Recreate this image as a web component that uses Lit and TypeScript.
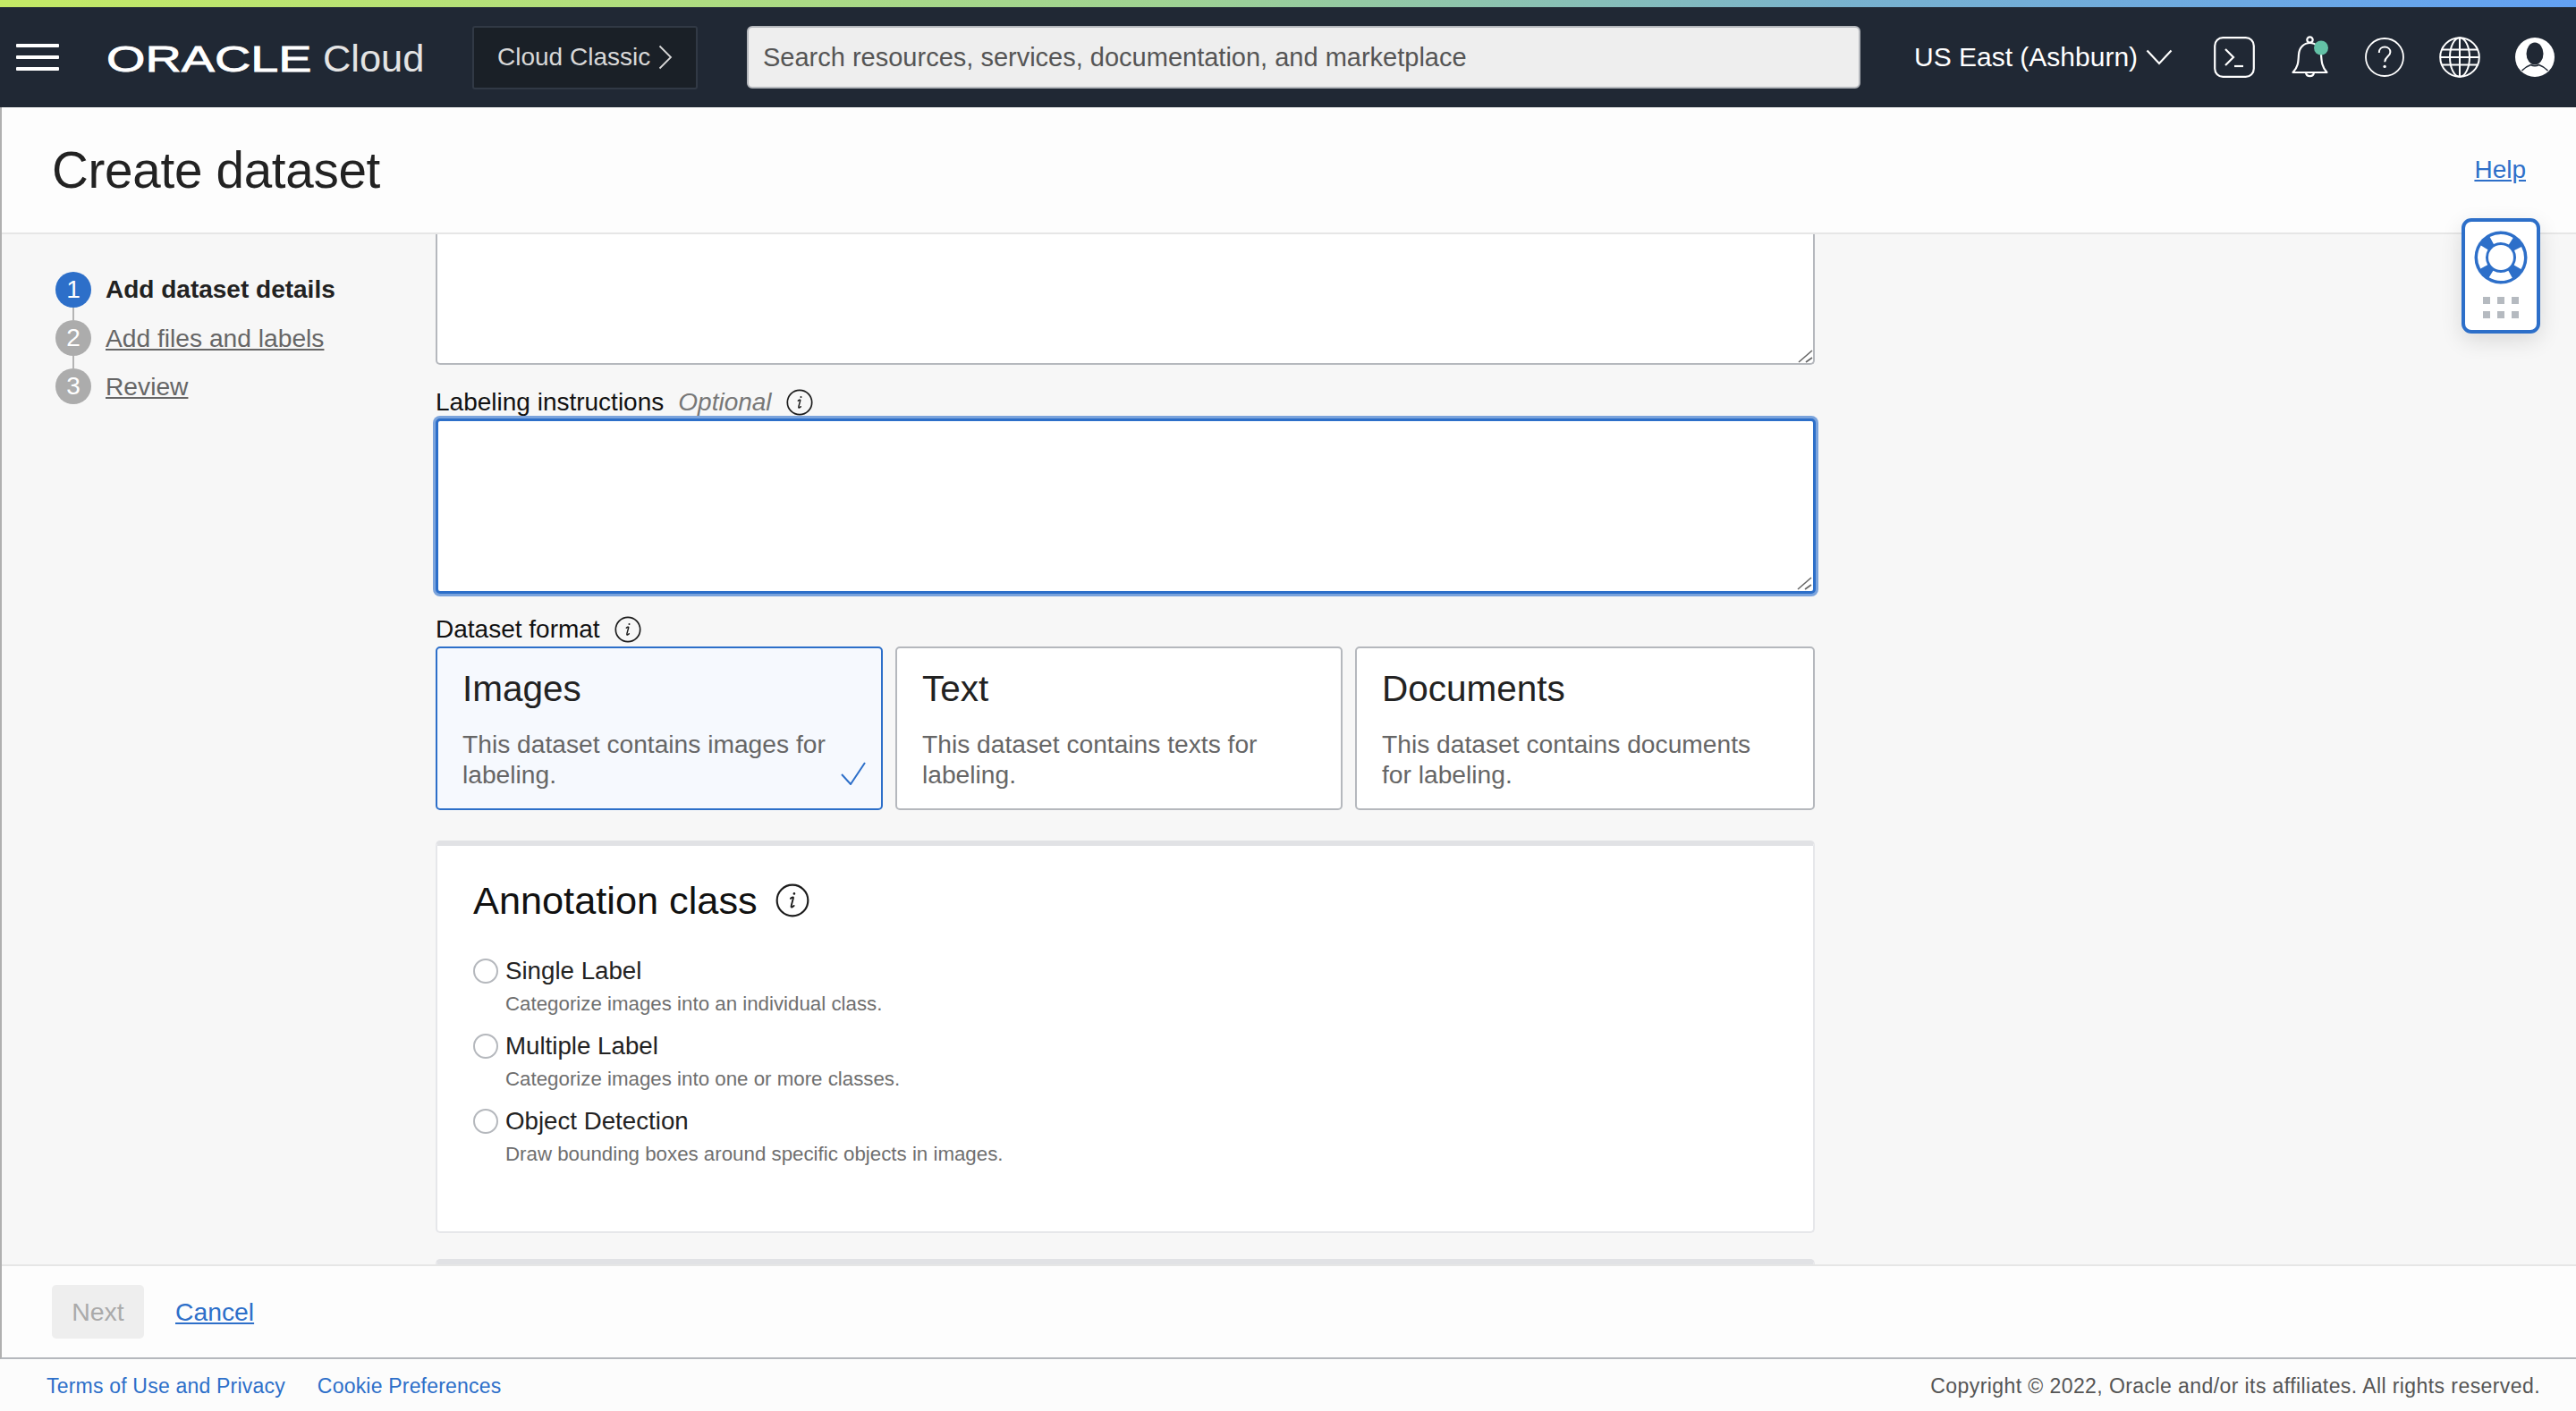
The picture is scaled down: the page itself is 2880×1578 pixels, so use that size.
import { LitElement, html, css, svg } from "lit";
import { customElement } from "lit/decorators.js";

const info = (size: number) => html`<svg class="info" width=${size} height=${size} viewBox="0 0 32 32" fill="none" stroke="#1c1c1c" stroke-width="1.8">
  <circle cx="16" cy="16" r="14.6"/>
  <path d="M14.2 14.2c1-1 2.4-1.6 2.6-.9.2.7-2.2 7.4-2 8.6.2 1 1.6.2 2.6-.9" stroke-width="1.6" stroke-linecap="round"/>
  <circle cx="17.6" cy="9.6" r="1.1" fill="#1c1c1c" stroke="none"/>
</svg>`;

const grip = html`<svg class="grip" width="20" height="20" viewBox="0 0 20 20" fill="none" stroke="#666" stroke-width="1.6"><path d="M2 17L17 4M10 17l7-5"/></svg>`;

const cards = [
  { t: "Images", d: "This dataset contains images for labeling.", sel: true },
  { t: "Text", d: "This dataset contains texts for labeling.", sel: false },
  { t: "Documents", d: "This dataset contains documents for labeling.", sel: false },
];
const radios = [
  { t: "Single Label", d: "Categorize images into an individual class." },
  { t: "Multiple Label", d: "Categorize images into one or more classes." },
  { t: "Object Detection", d: "Draw bounding boxes around specific objects in images." },
];

@customElement("app-root")
export class AppRoot extends LitElement {
  static styles = css`
    :host { display: block; width: 2880px; height: 1578px; overflow: hidden; position: relative;
      font-family: "Liberation Sans", Arial, sans-serif; color: #1c1c1c; background: #fcfcfc; }
    * { box-sizing: border-box; }
    a { color: #2d6fc9; }
    .strip { height: 8px; background: linear-gradient(90deg, #c4ea66 0%, #9fd392 45%, #78b2cf 72%, #62a1f3 100%); }
    .bar { height: 112px; background: #202834; display: flex; align-items: center; color: #fff; padding-right: 24px; }
    .burger { width: 48px; margin-left: 18px; display: flex; flex-direction: column; gap: 9px; }
    .burger i { display: block; height: 4px; background: #fff; border-radius: 1px; }
    .logo { margin-left: 53px; display: block; overflow: visible; }
    .classic { margin-left: 55px; width: 252px; height: 71px; background: #1a2027; border: 2px solid #313945; border-radius: 3px;
      color: #d8d8d8; font-size: 28px; display: flex; align-items: center; padding-left: 26px; gap: 9px; }
    .search { margin-left: 55px; width: 1245px; height: 70px; background: #eee; border: 2px solid #b5b8bd; border-radius: 6px;
      color: #555; font-size: 29px; display: flex; align-items: center; padding-left: 16px; }
    .region { margin-left: 60px; font-size: 30px; display: flex; align-items: center; gap: 9px; }
    .icons { margin-left: auto; display: flex; align-items: center; gap: 39px; }
    .icons svg { display: block; }
    .icons svg:nth-child(2) { margin-left: 2px; }
    .icons svg:nth-child(3) { margin-left: -1px; }
    .page { height: 1400px; border-left: 2px solid #b0b0b0; border-bottom: 2px solid #b5b8bd; display: flex; flex-direction: column; }
    .head { height: 142px; flex: none; background: #fdfdfd; border-bottom: 2px solid #e6e6e6; display: flex; align-items: center;
      justify-content: space-between; padding: 0 56px 0 56px; }
    h1 { margin: 0; font-weight: 400; font-size: 56.6px; letter-spacing: -.3px; color: #222; }
    .help { font-size: 28px; }
    .body { height: 1152px; flex: none; background: #f7f7f7; display: flex; overflow: hidden; }
    .steps { width: 485px; flex: none; padding: 42px 0 0 60px; display: flex; flex-direction: column; }
    .step { display: flex; align-items: center; gap: 16px; font-size: 28.2px; color: #666; position: relative; height: 40px; margin-bottom: 14px; }
    .num { width: 40px; height: 40px; border-radius: 50%; background: #acacac; color: #fff; display: flex; align-items: center; justify-content: center; font-size: 28px; flex: none; }
    .step:not(:last-child)::after { content: ""; position: absolute; left: 19px; top: 40px; width: 2px; height: 14px; background: #b4b4b4; }
    .step.on .num { background: #2d6fc9; }
    .step.on b { color: #222; font-size: 28px; }
    .step a { color: #666; }
    .form { width: 1542px; flex: none; display: flex; flex-direction: column; }
    .wrap { position: relative; flex: none; }
    .grip { position: absolute; right: 0; bottom: 0; display: block; }
    .w1 { width: 1542px; height: 146px; }
    .w2 { width: 1543px; height: 196px; }
    .w2 .grip { right: 2px; bottom: 2px; }
    textarea { display: block; width: 100%; height: 100%; background: #fff; padding: 10px; outline: none; font-family: inherit; resize: none; }
    .ta1 { border: 2px solid #b5b8bd; border-top: none; border-radius: 0 0 5px 5px; }
    .lab { display: flex; align-items: center; font-size: 28px; color: #111; height: 34px; flex: none; }
    .lab em { color: #777; margin-left: 16px; }
    .lab .info { margin-left: 16px; }
    .lab.l1 { margin-top: 25px; margin-bottom: 1px; }
    .ta2 { border: 3px solid #2d6fc9; border-radius: 5px; box-shadow: 0 0 0 3px #7aa3dc; }
    .lab.l2 { margin-top: 23px; margin-bottom: 2px; }
    .cards { display: flex; gap: 14px; height: 183px; flex: none; }
    .card { position: relative; background: #fff; border: 2px solid #b5b8bd; border-radius: 5px; padding: 22px 50px 0 28px; width: 500px; flex: none; }
    .card:nth-child(3) { width: 514px; }
    .card.sel { background: #f6f9fe; border-color: #2d6fc9; }
    .card h3 { margin: 0; font-weight: 400; font-size: 40.5px; line-height: 46px; color: #222; }
    .card p { margin: 22px 0 0; font-size: 28.2px; line-height: 34px; color: #666; }
    .check { position: absolute; right: 17px; bottom: 26px; display: block; }
    .panel { background: #fff; border: 2px solid #e6e7ea; border-top: 6px solid #e1e2e5; border-radius: 5px; flex: none; }
    .p1 { margin-top: 34px; height: 439px; padding: 35px 40px 0; }
    .p1 h2 { margin: 0 0 36px; font-weight: 400; font-size: 43.3px; line-height: 52px; color: #111; display: flex; align-items: center; gap: 20px; }
    .radio { display: grid; grid-template-columns: 27px 1fr; column-gap: 9px; align-items: center; height: 84px; align-content: start; }
    .dot { width: 28px; height: 28px; border-radius: 50%; border: 2px solid #b5b8bd; background: #fff; }
    .radio span { font-size: 27.7px; line-height: 34px; color: #222; }
    .radio small { grid-column: 2; font-size: 22.3px; line-height: 30px; margin-top: 5px; color: #6f6f6f; }
    .p2 { margin-top: 29px; height: 200px; }
    .actions { height: 104px; flex: none; background: #fdfdfd; border-top: 2px solid #e6e6e6; display: flex; align-items: center; padding-left: 56px; gap: 35px; font-size: 28.3px; }
    .next { width: 103px; height: 60px; border-radius: 5px; background: #eee; color: #aaa; display: flex; align-items: center; justify-content: center; font-size: 28.5px; }
    .foot { height: 58px; display: flex; align-items: center; justify-content: space-between; padding: 2px 40px 0 52px; font-size: 23px; color: #555; background: #fcfcfc; }
    .foot a { text-decoration: none; margin-right: 36px; letter-spacing: .2px; }
    .copy { letter-spacing: .42px; }
    .widget { position: absolute; left: 2752px; top: 244px; width: 88px; height: 129px; background: #fff; border: 4px solid #2d6fc9; border-radius: 11px;
      box-shadow: 0 8px 24px rgba(0,0,0,.12); display: flex; flex-direction: column; align-items: center; padding-top: 10px; }
    .grid { display: grid; grid-template-columns: repeat(3, 8px); grid-auto-rows: 8px; gap: 8px; margin-top: 14px; }
    .grid i { background: #b5bac0; }
  `;

  render() {
    return html`
      <div class="strip"></div>
      <header class="bar">
        <div class="burger"><i></i><i></i><i></i></div>
        <svg class="logo" width="354" height="48" viewBox="0 0 354 48">
          <g transform="scale(1.396 1)"><text x="0" y="40" font-family="Liberation Sans" font-size="40" fill="#fff" stroke="#fff" stroke-width=".8">ORACLE</text></g>
          <text x="242" y="40" font-family="Liberation Sans" font-size="43.400" fill="#e4e4e4">Cloud</text>
        </svg>
        <div class="classic">Cloud Classic
          <svg width="16" height="28" viewBox="0 0 16 28" fill="none" stroke="#d8d8d8" stroke-width="1.8"><path d="M1.5 1.5L14 14 1.5 26.5"/></svg>
        </div>
        <div class="search">Search resources, services, documentation, and marketplace</div>
        <div class="region">US East (Ashburn)
          <svg width="30" height="18" viewBox="0 0 30 18" fill="none" stroke="#fff" stroke-width="2.2"><path d="M1.5 1.5L15 16 28.5 1.5"/></svg>
        </div>
        <div class="icons">
          <svg width="46" height="46" viewBox="0 0 46 46" fill="none" stroke="#fff" stroke-width="2.2">
            <rect x="1.2" y="1.2" width="43.6" height="43.6" rx="9"/><path d="M13 14l9 9-9 9"/><path d="M23 33h10"/></svg>
          <svg width="44" height="48" viewBox="0 0 44 48" fill="none" stroke="#fff" stroke-width="2.2">
            <path d="M1.5 41c6-6 6-12 6.5-20 .5-8 6-13 12.5-13s12 5 12.5 13c.5 8 1 14 6.5 20z" stroke-linejoin="round"/>
            <circle cx="20.5" cy="4.5" r="3.2"/><path d="M16 41.5a4.6 4.6 0 0 0 9 0"/>
            <circle cx="33" cy="13.5" r="8" fill="#63c1a6" stroke="none"/></svg>
          <svg width="44" height="44" viewBox="0 0 44 44" fill="none" stroke="#fff" stroke-width="1.8">
            <circle cx="22" cy="22" r="21"/><path d="M15.8 17c0-4 2.8-6.4 6.4-6.4s6.2 2.4 6.2 5.6c0 4.8-5.800 5-6.200 11" stroke-width="2"/><circle cx="22.1" cy="32.400" r="1.700" fill="#fff" stroke="none"/></svg>
          <svg width="46" height="46" viewBox="0 0 46 46" fill="none" stroke="#fff" stroke-width="2">
            <circle cx="23" cy="23" r="21.800"/><ellipse cx="23" cy="23" rx="11" ry="21.800"/><path d="M23 1v44M2.800 14.500h40.400M1.200 23h43.600M2.800 31.500h40.400"/></svg>
          <svg width="44" height="44" viewBox="0 0 44 44">
            <circle cx="22" cy="22" r="22" fill="#fff"/>
            <ellipse cx="22" cy="18" rx="9.500" ry="12.500" fill="#202834"/>
            <path d="M7.500 37c4-4 7-5.500 10-6.500 2.500 1.400 6.500 1.400 9 0 3 1 6 2.500 10 6.500" fill="none" stroke="#202834" stroke-width="1.600"/></svg>
        </div>
      </header>
      <div class="page">
        <div class="head"><h1>Create dataset</h1><a class="help" href="#">Help</a></div>
        <div class="body">
          <nav class="steps">
            <div class="step on"><div class="num">1</div><b>Add dataset details</b></div>
            <div class="step"><div class="num">2</div><a href="#">Add files and labels</a></div>
            <div class="step"><div class="num">3</div><a href="#">Review</a></div>
          </nav>
          <div class="form">
            <div class="wrap w1"><textarea class="ta1"></textarea>${grip}</div>
            <div class="lab l1">Labeling instructions<em>Optional</em>${info(30)}</div>
            <div class="wrap w2"><textarea class="ta2"></textarea>${grip}</div>
            <div class="lab l2">Dataset format${info(30)}</div>
            <div class="cards">
              ${cards.map((c) => html`<div class="card ${c.sel ? "sel" : ""}">
                <h3>${c.t}</h3><p>${c.d}</p>
                ${c.sel ? svg`<svg class="check" width="28" height="26" viewBox="0 0 28 26" fill="none" stroke="#2d6fc9" stroke-width="2"><path d="M1 14l10 11L27 1"/></svg>` : ""}
              </div>`)}
            </div>
            <section class="panel p1">
              <h2>Annotation class ${info(38)}</h2>
              ${radios.map((r) => html`<div class="radio"><div class="dot"></div><span>${r.t}</span><small>${r.d}</small></div>`)}
            </section>
            <section class="panel p2"></section>
          </div>
        </div>
        <div class="actions"><div class="next">Next</div><a href="#">Cancel</a></div>
      </div>
      <footer class="foot">
        <div><a href="#">Terms of Use and Privacy</a><a href="#">Cookie Preferences</a></div>
        <div class="copy">Copyright © 2022, Oracle and/or its affiliates. All rights reserved.</div>
      </footer>
      <div class="widget">
        <svg width="60" height="60" viewBox="0 0 60 60">
          <circle cx="30" cy="30" r="29.500" fill="#2d6fc9"/>
          <circle cx="30" cy="30" r="21.500" fill="none" stroke="#fff" stroke-width="9" stroke-dasharray="22.500 11.270" stroke-dashoffset="11.250"/>
          <circle cx="30" cy="30" r="14" fill="#fff"/>
        </svg>
        <div class="grid"><i></i><i></i><i></i><i></i><i></i><i></i></div>
      </div>
    `;
  }
}
